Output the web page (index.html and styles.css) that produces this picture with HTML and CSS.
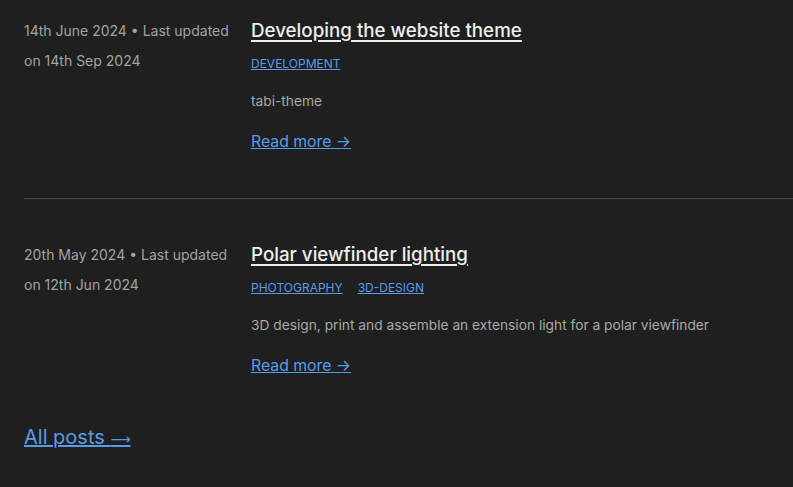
FILE: index.html
```html
<!DOCTYPE html>
<html>
<head>
<meta charset="utf-8">
<link rel="stylesheet" href="styles.css">
</head>
<body>
<main class="list">
  <article class="post">
    <div class="meta">14th June 2024 • Last updated on 14th Sep 2024</div>
    <div class="body">
      <h2 class="title"><a href="#">Developing the website theme</a></h2>
      <div class="tags"><a href="#">DEVELOPMENT</a></div>
      <p class="desc">tabi-theme</p>
      <a class="more" href="#">Read more →</a>
    </div>
  </article>
  <hr class="divider">
  <article class="post">
    <div class="meta">20th May 2024 • Last updated on 12th Jun 2024</div>
    <div class="body">
      <h2 class="title"><a href="#">Polar viewfinder lighting</a></h2>
      <div class="tags"><a href="#">PHOTOGRAPHY</a><a href="#">3D-DESIGN</a></div>
      <p class="desc">3D design, print and assemble an extension light for a polar viewfinder</p>
      <a class="more" href="#">Read more →</a>
    </div>
  </article>
  <a class="all" href="#">All posts <span class="arrow">⟶</span></a>
</main>
</body>
</html>
```
FILE: styles.css
```css
html, body {
  margin: 0;
  padding: 0;
  background: #1f1f1f;
}
body {
  font-family: Inter, "Noto Sans", sans-serif;
  color: #d8d8d8;
}
.list {
  padding: 16px 0 0 24px;
}
.post {
  display: flex;
  gap: 17px;
}
.meta {
  width: 210px;
  flex: none;
  font-size: 14px;
  line-height: 30px;
  color: #a3a3a3;
}
.body {
  flex: 1;
  padding-bottom: 44px;
}
.title {
  margin: 0;
  font-size: 18.75px;
  line-height: 30px;
  font-weight: 500;
}
.title a {
  color: #eeeeee;
  text-decoration: underline;
  text-underline-offset: 3px;
  text-decoration-thickness: 2px;
}
.tags {
  display: flex;
  gap: 15px;
  margin-top: 9px;
  font-size: 12px;
  line-height: 18px;
}
.tags a {
  color: #5a9be8;
}
.desc {
  margin: 17px 0 0;
  font-size: 13.75px;
  line-height: 22px;
  color: #a8a8a8;
}
.more {
  display: inline-block;
  margin-top: 18px;
  font-size: 15.8px;
  line-height: 24px;
  color: #5a9be8;
}
.divider {
  margin: 0 0 41px;
  border: none;
  border-top: 1px solid #4a4a4a;
}
.all {
  display: inline-block;
  margin-top: 0;
  font-size: 20px;
  line-height: 30px;
  color: #5a9be8;
}
.arrow {
  font-family: "DejaVu Sans", sans-serif;
  font-size: 14px;
}
```
